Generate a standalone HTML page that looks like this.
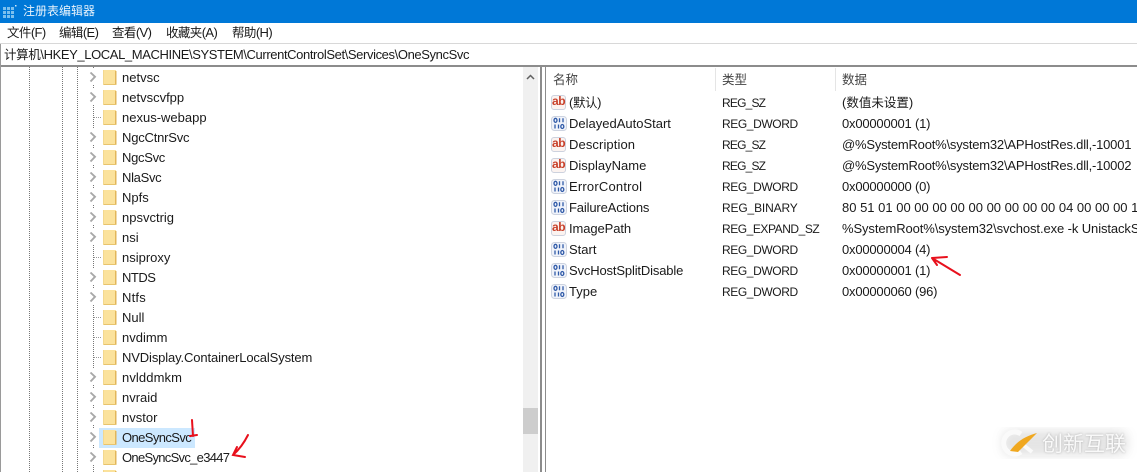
<!DOCTYPE html>
<html><head><meta charset="utf-8">
<style>
html,body{margin:0;padding:0;background:#fff}
#p{position:relative;width:1137px;height:472px;overflow:hidden;background:#fff;font-family:"Liberation Sans","Noto Sans CJK SC",sans-serif;font-size:13px;color:#1a1a1a}
.t{position:absolute;white-space:nowrap;line-height:20px;height:20px}
.b{position:absolute}
.c{font-size:12.5px}
.m{letter-spacing:-.6px}
.ab{position:absolute;left:551px;width:15px;height:15px;background:#fbf3f0;border:1px solid #cdd2de;border-radius:3px;box-sizing:border-box;color:#c8402a;font:bold 12px/11px "Liberation Sans",sans-serif;text-align:center;letter-spacing:-.4px}
.r{font-size:12px}
.sz{letter-spacing:-.8px}
.dw{letter-spacing:-.4px}
.v{letter-spacing:-.2px}
</style></head><body><div id="p">
<div class="b" style="left:0;top:0;width:1137px;height:23px;background:#0078d7"></div>
<div class="t" style="left:23px;top:1px;color:#e8f3fc;font-size:12px">注册表编辑器</div>
<div class="t m" style="left:7px;top:23px"><span class="c">文件</span>(F)</div>
<div class="t m" style="left:59px;top:23px"><span class="c">编辑</span>(E)</div>
<div class="t m" style="left:112px;top:23px"><span class="c">查看</span>(V)</div>
<div class="t m" style="left:166px;top:23px"><span class="c">收藏夹</span>(A)</div>
<div class="t m" style="left:232px;top:23px"><span class="c">帮助</span>(H)</div>
<div class="t" style="left:4px;top:45px;letter-spacing:-.39px"><span class="c">计算机</span>\HKEY_LOCAL_MACHINE\SYSTEM\CurrentControlSet\Services\OneSyncSvc</div>
<div class="b" style="left:99px;top:428px;width:96px;height:20px;background:#cce8ff"></div>
<div class="b" style="left:523px;top:67px;width:15px;height:405px;background:#f0f0f0"></div>
<div class="b" style="left:523px;top:408px;width:15px;height:26px;background:#cdcdcd"></div>
<svg class="b" style="left:0;top:0" width="1137" height="472">
<defs>
<g id="f"><rect x="0" y="0" width="13" height="15" fill="#fbe29c"/><rect x="12" y="1" width="1.500" height="14" fill="#e2b65a"/><rect x="0" y="14" width="13.500" height="1" fill="#e8c46e"/><rect x="0" y="0" width="1" height="15" fill="#f3d88f"/></g>
<g id="v"><rect x="-5" y="-8" width="10" height="16" fill="#fff"/><path d="M-2.500-4.500L2-.2L-2.500 4.500" fill="none" stroke="#a8a8a8" stroke-width="1.900"/></g>
<g id="d"><rect x="0" y="0" width="15" height="14" rx="3" fill="#f0f3fa" stroke="#cdd3e0"/><g fill="none" stroke="#2f5aa8" stroke-width="1.300"><ellipse cx="4" cy="3.800" rx="1.500" ry="2"/><path d="M8 1.800V5.800M11.500 1.800V5.800"/><path d="M3.500 8V12M7 8V12"/><ellipse cx="10.800" cy="10" rx="1.500" ry="2"/></g></g>
</defs>
<rect x="0" y="43" width="1137" height="1" fill="#d8d8d8"/>
<rect x="0" y="65" width="1137" height="2" fill="#8c8c8c"/>
<rect x="0" y="44" width="1" height="428" fill="#9a9a9a"/>
<rect x="540" y="67" width="2" height="405" fill="#8c8c8c"/>
<rect x="545" y="67" width="1" height="405" fill="#8c8c8c"/>
<rect x="715" y="68" width="1" height="23" fill="#e5e5e5"/>
<rect x="835" y="68" width="1" height="23" fill="#e5e5e5"/>
<g fill="#7cc0ee"><rect x="3" y="7" width="3" height="3"/><rect x="7" y="7" width="3" height="3"/><rect x="11" y="7" width="3" height="3"/><rect x="3" y="11" width="3" height="3"/><rect x="7" y="11" width="3" height="3"/><rect x="11" y="11" width="3" height="3"/><rect x="3" y="15" width="3" height="3"/><rect x="7" y="15" width="3" height="3"/><rect x="11" y="15" width="3" height="3"/><rect x="15" y="5" width="1.500" height="1.500" fill="#cfe8fa"/></g>
<g stroke="#777" stroke-dasharray="1 1" stroke-width="1"><path d="M29.500 67V472M62.500 67V472M77.500 67V472M93.500 67V472" /></g>
<g stroke="#999" stroke-dasharray="1 1"><path d="M94 117.500H101M94 257.500H101M94 317.500H101M94 337.500H101M94 357.500H101"/></g>
<g transform="translate(93,77)"><use href="#v"/></g><g transform="translate(93,97)"><use href="#v"/></g><g transform="translate(93,137)"><use href="#v"/></g><g transform="translate(93,157)"><use href="#v"/></g><g transform="translate(93,177)"><use href="#v"/></g><g transform="translate(93,197)"><use href="#v"/></g><g transform="translate(93,217)"><use href="#v"/></g><g transform="translate(93,237)"><use href="#v"/></g><g transform="translate(93,277)"><use href="#v"/></g><g transform="translate(93,297)"><use href="#v"/></g><g transform="translate(93,377)"><use href="#v"/></g><g transform="translate(93,397)"><use href="#v"/></g><g transform="translate(93,417)"><use href="#v"/></g><g transform="translate(93,437)"><use href="#v"/></g><g transform="translate(93,457)"><use href="#v"/></g>
<path d="M527 79L530.500 75.500L534 79" fill="none" stroke="#606060" stroke-width="1.500"/>
<use href="#f" x="103" y="70"/><use href="#f" x="103" y="90"/><use href="#f" x="103" y="110"/><use href="#f" x="103" y="130"/><use href="#f" x="103" y="150"/><use href="#f" x="103" y="170"/><use href="#f" x="103" y="190"/><use href="#f" x="103" y="210"/><use href="#f" x="103" y="230"/><use href="#f" x="103" y="250"/><use href="#f" x="103" y="270"/><use href="#f" x="103" y="290"/><use href="#f" x="103" y="310"/><use href="#f" x="103" y="330"/><use href="#f" x="103" y="350"/><use href="#f" x="103" y="370"/><use href="#f" x="103" y="390"/><use href="#f" x="103" y="410"/><use href="#f" x="103" y="430"/><use href="#f" x="103" y="450"/><use href="#f" x="103" y="470"/>
<use href="#d" x="551.500" y="116.500"/><use href="#d" x="551.500" y="179.500"/><use href="#d" x="551.500" y="200.500"/><use href="#d" x="551.500" y="242.500"/><use href="#d" x="551.500" y="263.500"/><use href="#d" x="551.500" y="284.500"/>
</svg>
<div class="ab" style="top:95px">ab</div><div class="ab" style="top:137px">ab</div><div class="ab" style="top:158px">ab</div><div class="ab" style="top:221px">ab</div>
<div class="t" style="left:122px;top:68px">netvsc</div>
<div class="t" style="left:122px;top:88px">netvscvfpp</div>
<div class="t" style="left:122px;top:108px">nexus-webapp</div>
<div class="t" style="left:122px;top:128px;letter-spacing:-.2px">NgcCtnrSvc</div>
<div class="t" style="left:122px;top:148px;letter-spacing:-.3px">NgcSvc</div>
<div class="t" style="left:122px;top:168px;letter-spacing:-.3px">NlaSvc</div>
<div class="t" style="left:122px;top:188px">Npfs</div>
<div class="t" style="left:122px;top:208px">npsvctrig</div>
<div class="t" style="left:122px;top:228px">nsi</div>
<div class="t" style="left:122px;top:248px">nsiproxy</div>
<div class="t" style="left:122px;top:268px;letter-spacing:-.5px">NTDS</div>
<div class="t" style="left:122px;top:288px;letter-spacing:.2px">Ntfs</div>
<div class="t" style="left:122px;top:308px">Null</div>
<div class="t" style="left:122px;top:328px">nvdimm</div>
<div class="t" style="left:122px;top:348px;letter-spacing:-.13px">NVDisplay.ContainerLocalSystem</div>
<div class="t" style="left:122px;top:368px;letter-spacing:.1px">nvlddmkm</div>
<div class="t" style="left:122px;top:388px">nvraid</div>
<div class="t" style="left:122px;top:408px">nvstor</div>
<div class="t" style="left:122px;top:428px;letter-spacing:-.6px">OneSyncSvc</div>
<div class="t" style="left:122px;top:448px;letter-spacing:-.7px">OneSyncSvc_e3447</div>
<div class="t c" style="left:553px;top:70px;color:#444">名称</div>
<div class="t c" style="left:722px;top:70px;color:#444">类型</div>
<div class="t c" style="left:842px;top:70px;color:#444">数据</div>
<div class="t" style="left:569px;top:93px;letter-spacing:-.4px">(<span class="c">默认</span>)</div>
<div class="t r sz" style="left:722px;top:93px">REG_SZ</div>
<div class="t" style="left:842px;top:93px">(<span class="c">数值未设置</span>)</div>
<div class="t" style="left:569px;top:114px">DelayedAutoStart</div>
<div class="t r dw" style="left:722px;top:114px">REG_DWORD</div>
<div class="t v" style="left:842px;top:114px">0x00000001 (1)</div>
<div class="t" style="left:569px;top:135px;letter-spacing:.1px">Description</div>
<div class="t r sz" style="left:722px;top:135px">REG_SZ</div>
<div class="t v" style="left:842px;top:135px">@%SystemRoot%\system32\APHostRes.dll,-10001</div>
<div class="t" style="left:569px;top:156px">DisplayName</div>
<div class="t r sz" style="left:722px;top:156px">REG_SZ</div>
<div class="t v" style="left:842px;top:156px">@%SystemRoot%\system32\APHostRes.dll,-10002</div>
<div class="t" style="left:569px;top:177px;letter-spacing:.2px">ErrorControl</div>
<div class="t r dw" style="left:722px;top:177px">REG_DWORD</div>
<div class="t v" style="left:842px;top:177px">0x00000000 (0)</div>
<div class="t" style="left:569px;top:198px;letter-spacing:-.15px">FailureActions</div>
<div class="t r" style="left:722px;top:198px;letter-spacing:-.15px">REG_BINARY</div>
<div class="t" style="left:842px;top:198px">80 51 01 00 00 00 00 00 00 00 00 00 04 00 00 00 1</div>
<div class="t" style="left:569px;top:219px;letter-spacing:-.1px">ImagePath</div>
<div class="t r" style="left:722px;top:219px;letter-spacing:-.45px">REG_EXPAND_SZ</div>
<div class="t" style="left:842px;top:219px;letter-spacing:-.1px">%SystemRoot%\system32\svchost.exe -k UnistackS</div>
<div class="t" style="left:569px;top:240px">Start</div>
<div class="t r dw" style="left:722px;top:240px">REG_DWORD</div>
<div class="t v" style="left:842px;top:240px">0x00000004 (4)</div>
<div class="t" style="left:569px;top:261px;letter-spacing:-.15px">SvcHostSplitDisable</div>
<div class="t r dw" style="left:722px;top:261px">REG_DWORD</div>
<div class="t v" style="left:842px;top:261px">0x00000001 (1)</div>
<div class="t" style="left:569px;top:282px">Type</div>
<div class="t r dw" style="left:722px;top:282px">REG_DWORD</div>
<div class="t v" style="left:842px;top:282px">0x00000060 (96)</div>
<svg class="b" style="left:0;top:0" width="1137" height="472">
<defs><filter id="bl"><feGaussianBlur stdDeviation="5"/></filter></defs>
<g fill="none" stroke="#e8101c" stroke-width="2" stroke-linecap="round">
<path d="M192 420L193 436M190 436L197 435"/>
<path d="M248 435Q242 447 233 455M237 447L233 455L245 457"/>
<path d="M960 275L932 258M932 258L947 257M932 258L937 265"/>
</g>
<rect x="1002" y="430" width="126" height="26" rx="10" fill="#aaa" opacity=".3" filter="url(#bl)"/>
<path d="M1021 434A11 11 0 1 0 1021 452" fill="none" stroke="#fafafa" stroke-width="5"/>
<path d="M1022 444L1032 452" stroke="#fafafa" stroke-width="4"/>
<path d="M1010 451C1017 441 1026 436 1037 433C1030 440 1024 446 1018 452Z" fill="#f0a820"/>
</svg>
<div class="t" style="left:1042px;top:433px;font-size:21px;line-height:24px;height:24px;color:#f9f9f9;text-shadow:0 0 2px #b0b0b0">创新互联</div>
</div></body></html>
